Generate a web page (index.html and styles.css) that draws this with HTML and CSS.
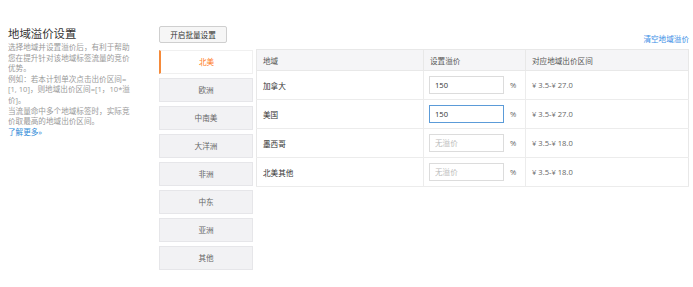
FILE: index.html
```html
<!DOCTYPE html>
<html>
<head>
    <title>地域溢价设置</title>
    <link rel="stylesheet" href="styles.css">
</head>
<body>
    <div class="page">
        <div class="intro">
            <h2>地域溢价设置</h2>
            <p>选择地域并设置溢价后，有利于帮助您在提升针对该地域标签流量的竞价优势。</p>
            <p>例如：若本计划单次点击出价区间=[1, 10]，则地域出价区间=[1，10*溢价]。</p>
            <p>当流量命中多个地域标签时，实际竞价取最高的地域出价区间。</p>
            <a href="#" class="more">了解更多»</a>
        </div>
        <div class="main">
            <div class="toolbar">
                <button type="button" class="btn">开启批量设置</button>
                <a href="#" class="clear">清空地域溢价</a>
            </div>
            <div class="content">
                <ul class="tabs">
                    <li class="tab active">北美</li>
                    <li class="tab">欧洲</li>
                    <li class="tab">中南美</li>
                    <li class="tab">大洋洲</li>
                    <li class="tab">非洲</li>
                    <li class="tab">中东</li>
                    <li class="tab">亚洲</li>
                    <li class="tab">其他</li>
                </ul>
                <table class="grid">
                    <thead>
                        <tr>
                            <th class="c-area">地域</th>
                            <th class="c-rate">设置溢价</th>
                            <th>对应地域出价区间</th>
                        </tr>
                    </thead>
                    <tbody>
                        <tr>
                            <td>加拿大</td>
                            <td><input type="text" value="150"><span class="pct">%</span></td>
                            <td class="range">¥ 3.5-¥ 27.0</td>
                        </tr>
                        <tr>
                            <td>美国</td>
                            <td><input type="text" value="150" class="focus"><span class="pct">%</span></td>
                            <td class="range">¥ 3.5-¥ 27.0</td>
                        </tr>
                        <tr>
                            <td>墨西哥</td>
                            <td><input type="text" placeholder="无溢价"><span class="pct">%</span></td>
                            <td class="range">¥ 3.5-¥ 18.0</td>
                        </tr>
                        <tr>
                            <td>北美其他</td>
                            <td><input type="text" placeholder="无溢价"><span class="pct">%</span></td>
                            <td class="range">¥ 3.5-¥ 18.0</td>
                        </tr>
                    </tbody>
                </table>
            </div>
        </div>
    </div>
</body>
</html>
```

FILE: styles.css
```css
body {
    margin: 0;
    font-family: "Open Sans", "Noto Sans CJK SC", sans-serif;
    font-size: 7.6px;
    color: #333;
    background: #fff;
}
.page {
    display: flex;
    padding: 26px 4px 0 8px;
}
.intro {
    width: 126px;
    flex-shrink: 0;
}
.intro h2 {
    margin: 1px 0 1px;
    font-size: 11.4px;
    font-weight: normal;
    line-height: 14px;
    color: #333;
}
.intro p {
    margin: 0;
    line-height: 10.6px;
    color: #9a9a9a;
}
.more {
    display: block;
    line-height: 10.6px;
    color: #2d8ad8;
    text-decoration: none;
}
.main {
    flex: 1;
    margin-left: 25px;
}
.toolbar {
    display: flex;
    justify-content: space-between;
    align-items: flex-end;
}
.btn {
    height: 17px;
    width: 68px;
    padding: 0;
    font-family: inherit;
    font-size: 7.6px;
    color: #333;
    background: #f6f6f6;
    border: 1px solid #cfcfcf;
    border-radius: 2px;
}
.clear {
    margin-bottom: -1px;
    color: #3a8ee6;
    text-decoration: none;
}
.content {
    display: flex;
    align-items: flex-start;
    margin-top: 6px;
}
.tabs {
    list-style: none;
    margin: 1px 3px 0 0;
    padding: 0;
    width: 94px;
}
.tab {
    box-sizing: border-box;
    height: 24px;
    line-height: 22px;
    margin-bottom: 4px;
    text-align: center;
    color: #666;
    background: #f2f2f4;
    border: 1px solid #e6e6e9;
}
.tab.active {
    color: #ff7a1a;
    background: #fff;
    border-color: #f0f0f0;
    border-left: 2px solid #f58a3a;
}
.grid {
    flex: 1;
    border-collapse: collapse;
    border: 1px solid #e8e8e8;
}
.grid th {
    height: 20px;
    padding: 0 6px;
    text-align: left;
    font-weight: normal;
    color: #555;
    background: #f5f5f7;
    border: 1px solid #e8e8e8;
}
.grid td {
    height: 28px;
    padding: 0 6px;
    border-top: 1px solid #ececec;
    border-bottom: 1px solid #ececec;
}
.grid td:nth-child(2) {
    padding-left: 5px;
    border-left: 1px solid #ececec;
    border-right: 1px solid #ececec;
}
.grid td.range {
    color: #666;
}
.c-area {
    width: 154px;
}
.c-rate {
    width: 89px;
}
.grid input {
    box-sizing: border-box;
    width: 75px;
    height: 18px;
    padding: 0 5px;
    vertical-align: middle;
    font-family: inherit;
    font-size: 7.6px;
    color: #333;
    border: 1px solid #dcdcdc;
    border-radius: 0;
    outline: none;
}
.grid input::placeholder {
    color: #bbb;
}
.grid input.focus {
    border-color: #5b9bd8;
}
.pct {
    margin-left: 6px;
    vertical-align: middle;
    color: #666;
}
```
